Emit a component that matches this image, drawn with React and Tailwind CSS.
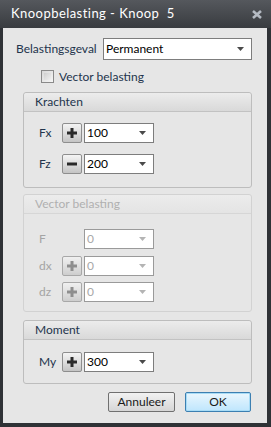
import React from "react";

const font = { fontFamily: "Lato, 'Liberation Sans', sans-serif" };

const Arrow = ({ disabled }) => (
  <svg width="7" height="4" viewBox="0 0 7 4" className="shrink-0">
    <path d="M0 0h7L3.5 4z" fill={disabled ? "#b4b4b4" : "#4a4a4a"} />
  </svg>
);

const Select = ({ value, disabled, className = "" }) => (
  <div
    className={`flex items-center justify-between bg-white border pl-[2px] pr-[7px] ${
      disabled ? "border-[#9a9a9a] text-[#a8a8a8] bg-[#e8e8e8]" : "border-[#7d7d7d] text-black"
    } ${className}`}
  >
    <span className="text-[12px] leading-none">{value}</span>
    <Arrow disabled={disabled} />
  </div>
);

const SignButton = ({ minus, disabled }) => (
  <div
    className={`w-[20px] h-[20px] border border-[#8e8e8e] rounded-[2px] flex items-center justify-center bg-gradient-to-b from-[#f4f4f4] via-[#dedede] to-[#c4c4c4] ${
      disabled ? "opacity-70" : ""
    }`}
  >
    <svg width="12" height="12" viewBox="0 0 12 12">
      <rect x="1" y="4.5" width="10" height="3" fill={disabled ? "#6a6a6a" : "#2a2a2a"} />
      {!minus && <rect x="4.5" y="1" width="3" height="10" fill={disabled ? "#6a6a6a" : "#2a2a2a"} />}
    </svg>
  </div>
);

const Row = ({ label, value, sign, disabled, className = "" }) => (
  <div className={`flex items-center h-[20px] ${className}`}>
    <span
      className={`w-[23px] pl-[15px] box-content text-[12px] ${
        disabled ? "text-[#a4a4a4]" : "text-[#23344c]"
      }`}
    >
      {label}
    </span>
    <div className="w-[22px] flex">
      {sign && <SignButton minus={sign === "-"} disabled={disabled} />}
    </div>
    <Select value={value} disabled={disabled} className="w-[70px] h-[20px]" />
  </div>
);

const Group = ({ title, disabled, className = "", children }) => (
  <div
    className={`ml-[20px] w-[229px] border rounded-[3px] ${
      disabled ? "border-[#d2d2d2]" : "border-[#bdbdbd]"
    } ${className}`}
  >
    <div
      className={`h-[19px] flex items-center pl-[11px] text-[12px] rounded-t-[3px] border-b bg-gradient-to-b ${
        disabled
          ? "from-[#ececec] to-[#e4e4e4] border-[#d6d6d6] text-[#b0b0b0]"
          : "from-[#ececec] to-[#d9d9d9] border-[#c2c2c2] text-[#23344c]"
      }`}
    >
      {title}
    </div>
    {children}
  </div>
);

export default function App() {
  return (
    <div style={font} className="w-[271px] h-[427px] bg-[#2f3236] flex flex-col">
      <div className="h-[28px] shrink-0 flex items-center justify-between pl-[11px] pr-[8px] bg-gradient-to-b from-[#55585d] to-[#393c40]">
        <span className="text-white text-[13px] tracking-[0.45px]">Knoopbelasting - Knoop&nbsp; 5</span>
        <svg width="10" height="9" viewBox="0 0 10 9" className="mr-[1px]">
          <path d="M1 1l8 7M9 1L1 8" stroke="#b4bac2" strokeWidth="2.6" />
        </svg>
      </div>
      <div className="flex-1 ml-[3px] mr-[4px] mb-[4px] bg-[#e6e6e6] flex flex-col">
        <div className="flex items-center mt-[10px] h-[22px] shrink-0">
          <span className="pl-[13px] w-[100px] text-[12px] text-[#23344c]">Belastingsgeval</span>
          <Select value="Permanent" className="w-[149px] h-[22px]" />
        </div>
        <div className="flex items-center mt-[10px] ml-[38px] h-[13px] shrink-0">
          <div className="w-[13px] h-[13px] border border-[#8a8a8a] bg-gradient-to-br from-[#d8d8d8] to-[#f6f6f6] p-[2px]">
            <div className="w-full h-full bg-gradient-to-br from-[#cfcfcf] to-[#f0f0f0]" />
          </div>
          <span className="ml-[5px] text-[12px] text-[#23344c]">Vector belasting</span>
        </div>

        <Group title="Krachten" className="mt-[9px] pb-[13px]">
          <Row label="Fx" value="100" sign="+" className="mt-[11px]" />
          <Row label="Fz" value="200" sign="-" className="mt-[11px]" />
        </Group>

        <Group title="Vector belasting" disabled className="mt-[6px] pb-[9px]">
          <Row label="F" value="0" disabled className="mt-[15px]" />
          <Row label="dx" value="0" sign="+" disabled className="mt-[7px]" />
          <Row label="dz" value="0" sign="+" disabled className="mt-[6px]" />
        </Group>

        <Group title="Moment" className="mt-[8px] pb-[11px]">
          <Row label="My" value="300" sign="+" className="mt-[12px]" />
        </Group>

        <div className="flex justify-end gap-[10px] mt-[8px] mr-[16px]">
          <button className="w-[67px] h-[20px] border border-[#707070] rounded-[2px] bg-gradient-to-b from-[#f2f2f2] to-[#d6d6d6] text-[12px] text-[#1a1a1a]">
            Annuleer
          </button>
          <button className="w-[66px] h-[20px] border border-[#3c7fb1] rounded-[2px] bg-gradient-to-b from-[#eaf6fd] to-[#bee6fd] text-[12px] text-[#1a1a1a] shadow-[inset_0_0_0_1px_#a8dcf6]">
            OK
          </button>
        </div>
      </div>
    </div>
  );
}
